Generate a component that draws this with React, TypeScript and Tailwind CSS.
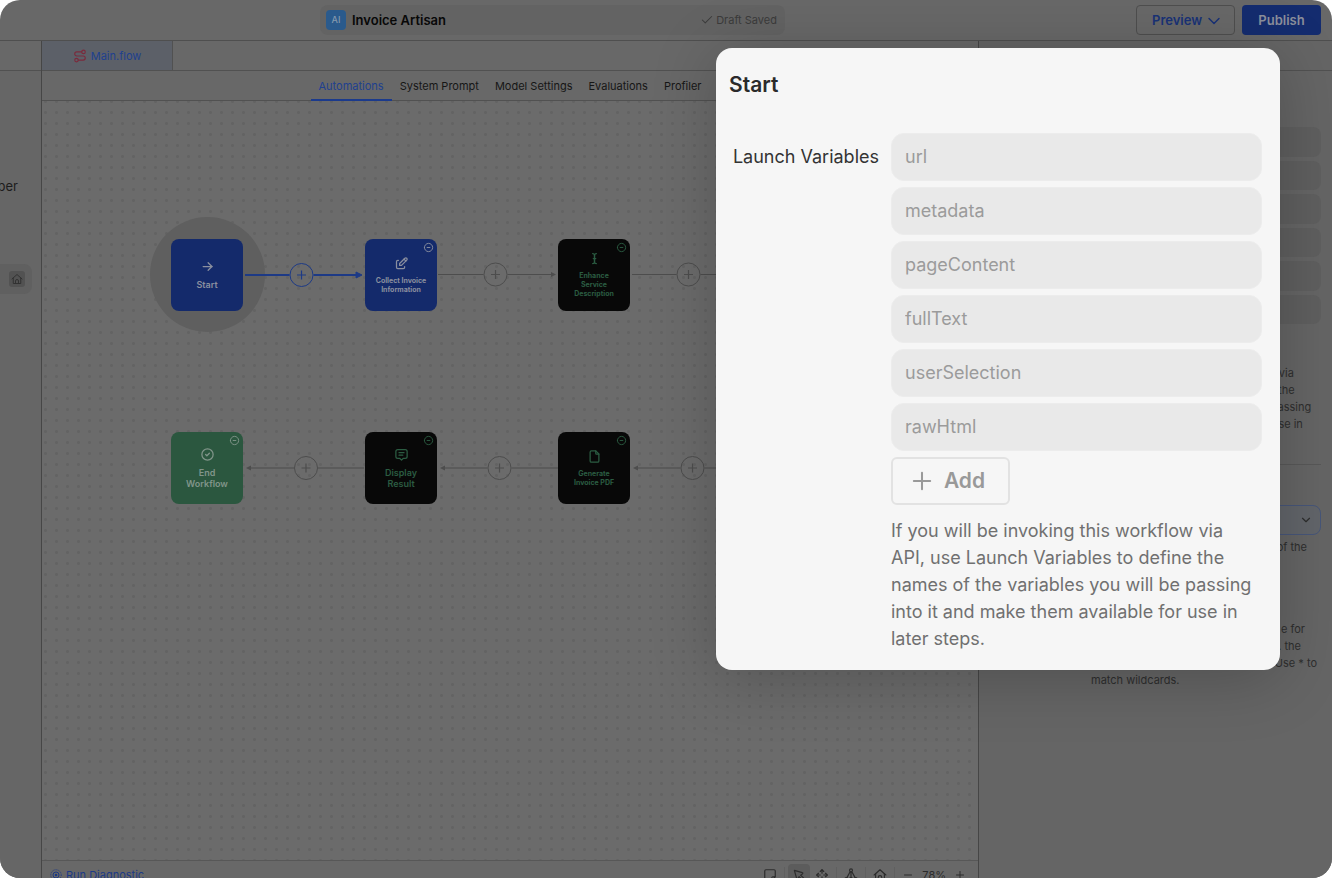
import React from "react";
import { Check, ChevronDown, Plus, Minus, Route } from "lucide-react";
import {
  TbArrowRight,
  TbArrowsMove,
  TbCircleCheck,
  TbCircleMinus,
  TbCursorText,
  TbEdit,
  TbFile,
  TbMessage2,
  TbPointer,
} from "react-icons/tb";

const launchVariables = ["url", "metadata", "pageContent", "fullText", "userSelection", "rawHtml"];
const views = ["Automations", "System Prompt", "Model Settings", "Evaluations", "Profiler"];

function HomeIcon({ className }: { className?: string }) {
  return (
    <svg viewBox="0 0 24 24" fill="none" stroke="currentColor" strokeWidth="2" strokeLinejoin="round" strokeLinecap="round" className={className}>
      <path d="M2 12 12 3l10 9" />
      <path d="M4.500 10v11h15V10" />
      <path d="M9 21v-5a3 3 0 0 1 6 0v5" />
    </svg>
  );
}

function NoteIcon() {
  return (
    <svg viewBox="0 0 24 24" fill="none" stroke="currentColor" strokeWidth="2" strokeLinejoin="round" className="size-[14px]">
      <path d="M3 5a2 2 0 0 1 2-2h14a2 2 0 0 1 2 2v10l-6 6H5a2 2 0 0 1-2-2z" />
      <path d="M21 15h-4a2 2 0 0 0-2 2v4" />
    </svg>
  );
}

function TreeIcon() {
  return (
    <svg viewBox="0 0 24 24" fill="none" stroke="currentColor" strokeWidth="2" className="size-[14px]">
      <circle cx="12" cy="4" r="2.500" />
      <circle cx="4" cy="19" r="2.500" />
      <circle cx="12" cy="19" r="2.500" />
      <circle cx="20" cy="19" r="2.500" />
      <path d="M12 6.500v10M10.500 6.500 5 16.500M13.500 6.500 19 16.500" />
    </svg>
  );
}

function DiagnosticIcon() {
  return (
    <svg viewBox="0 0 24 24" fill="none" stroke="currentColor" className="size-3">
      <circle cx="12" cy="12" r="10.500" strokeWidth="2" strokeDasharray="2 2.100" />
      <circle cx="12" cy="12" r="6" strokeWidth="2" />
      <circle cx="12" cy="12" r="2.500" fill="currentColor" stroke="none" />
    </svg>
  );
}

type NodeProps = {
  place: string;
  tone: string;
  text: string;
  icon: React.ReactNode;
  lines: string[];
  collapsible?: boolean;
};

function FlowNode({ place, tone, text, icon, lines, collapsible = true }: NodeProps) {
  return (
    <div className={`absolute flex size-[72px] flex-col items-center justify-center gap-[5px] rounded-lg pb-px ${place} ${tone}`}>
      {collapsible && <TbCircleMinus className="absolute top-[3px] right-[3px] size-[11px]" />}
      {icon}
      <div className={`text-center ${text}`}>
        {lines.map((line) => (
          <div key={line}>{line}</div>
        ))}
      </div>
    </div>
  );
}

function Connector({ x, y, plus, left, active }: { x: number; y: number; plus: number; left?: boolean; active?: boolean }) {
  const end = x + 117;
  return (
    <g className={active ? "text-[#1d3a86]" : "text-[#4d4d4d]"} stroke="currentColor" strokeWidth={active ? 2 : 1}>
      <path d={`M${left ? x + 2 : x} ${y}H${plus - 12}M${plus + 12} ${y}H${left ? end + 1 : end - 3}`} />
      <path
        d={left ? `M${x} ${y}l5-2.500v5z` : active ? `M${end} ${y}l-6-3v6z` : `M${end + 1} ${y}l-5-2.500v5z`}
        fill="currentColor"
        strokeWidth={active ? 1 : 0}
      />
      <circle cx={plus} cy={y} r="11.500" fill="none" strokeWidth="1" />
      <path d={`M${plus - 4.5} ${y}h9M${plus} ${y - 4.5}v9`} strokeWidth="1.200" />
    </g>
  );
}

function Canvas() {
  return (
    <div className="relative min-h-0 flex-1 overflow-hidden bg-[#6b6b6b] bg-[radial-gradient(circle_at_center,#636363_1px,transparent_2px)] bg-[size:11px_11px] bg-[position:-2px_6px]">
      <div className="absolute top-[116px] left-[108px] size-[115px] rounded-full bg-[#5f5f5f]" />
      <svg className="absolute inset-0 size-full" aria-hidden="true">
        <Connector x={203} y={174} plus={259.5} active />
        <Connector x={396} y={173.5} plus={453.5} />
        <Connector x={590} y={173.5} plus={646.5} />
        <Connector x={204} y={367} plus={264} left />
        <Connector x={398} y={367} plus={457.5} left />
        <Connector x={591} y={367} plus={650.5} left />
      </svg>
      <FlowNode place="top-[138px] left-[129px]" tone="bg-[#142a6b] text-[#8a8f9f]" text="text-[9px] leading-[11px] font-semibold" icon={<TbArrowRight className="size-[15px]" />} lines={["Start"]} collapsible={false} />
      <FlowNode place="top-[138px] left-[323px]" tone="bg-[#142a6b] text-[#8a8f9f]" text="text-[7px] leading-[9px] font-bold" icon={<TbEdit className="size-[15px]" />} lines={["Collect Invoice", "Information"]} />
      <FlowNode place="top-[138px] left-[516px]" tone="bg-[#080808] text-[#2b5c42]" text="text-[7px] leading-[9px] font-bold" icon={<TbCursorText className="size-[15px]" />} lines={["Enhance", "Service", "Description"]} />
      <FlowNode place="top-[331px] left-[129px]" tone="bg-[#2b573f] text-[#81958a]" text="text-[9px] leading-[11px] font-semibold" icon={<TbCircleCheck className="size-[15px]" />} lines={["End", "Workflow"]} />
      <FlowNode place="top-[331px] left-[323px]" tone="bg-[#080808] text-[#2b5c42]" text="text-[9px] leading-[11px] font-semibold" icon={<TbMessage2 className="size-[15px]" />} lines={["Display", "Result"]} />
      <FlowNode place="top-[331px] left-[516px]" tone="bg-[#080808] text-[#2b5c42]" text="text-[7px] leading-[9px] font-bold" icon={<TbFile className="size-[15px]" />} lines={["Generate", "Invoice PDF"]} />
    </div>
  );
}

function CanvasFooter() {
  return (
    <footer className="h-[18px] shrink-0 overflow-hidden border-t border-[#575757]">
      <div className="flex h-7 items-center pr-3 pl-2">
        <button className="flex items-center gap-1 text-[11px] text-[#1d3a86]">
          <DiagnosticIcon />
          Run Diagnostic
        </button>
        <div className="ml-auto flex items-center gap-[7px] text-[#2c2c2c]">
          <button aria-label="Add note"><NoteIcon /></button>
          <div className="h-4 w-px bg-[#606060]" />
          <div className="-ml-1 flex items-center gap-[5px]">
            <button aria-label="Select" className="flex size-[22px] items-center justify-center rounded bg-[#5c5c5c]"><TbPointer className="size-[14px]" /></button>
            <button aria-label="Pan"><TbArrowsMove className="size-[14px]" /></button>
          </div>
          <div className="h-4 w-px bg-[#606060]" />
          <button aria-label="Arrange"><TreeIcon /></button>
          <div className="h-4 w-px bg-[#606060]" />
          <button aria-label="Reset view"><HomeIcon className="size-[14px]" /></button>
          <div className="h-4 w-px bg-[#606060]" />
          <div className="flex items-center gap-2">
            <button aria-label="Zoom out"><Minus className="size-3" /></button>
            <span className="text-[11px]">78%</span>
            <button aria-label="Zoom in"><Plus className="size-3" /></button>
          </div>
        </div>
      </div>
    </footer>
  );
}

function LaunchModal() {
  return (
    <section role="dialog" aria-labelledby="dialog-title" className="absolute top-12 right-[52px] w-[564px] rounded-2xl bg-[#f6f6f6] pt-[22px] pr-[18px] pb-[18px] pl-[13px] shadow-[0_8px_64px_rgba(0,0,0,0.220)]">
      <h2 id="dialog-title" className="text-[21px] leading-[30px] font-semibold text-[#2a2a2a]">Start</h2>
      <div className="mt-[33px] flex">
        <label htmlFor="variable-url" className="w-[162px] shrink-0 pr-3 text-right text-[18px] leading-[48px] text-[#333333]">Launch Variables</label>
        <div className="min-w-0 flex-1">
          <div className="flex flex-col gap-1.5">
            {launchVariables.map((name) => (
              <input
                key={name}
                id={`variable-${name}`}
                aria-label={name === "url" ? undefined : name}
                defaultValue={name}
                className="h-12 w-full rounded-[13px] border border-[#ececec] bg-[#e9e9e9] px-[13px] pb-0.5 text-[18px] text-[#9b9b9b]"
              />
            ))}
            <button className="flex h-12 w-[119px] items-center justify-center gap-2 rounded-md border-2 border-[#e2e2e2] pr-2 text-[21px] font-semibold text-[#999999]">
              <Plus className="size-7" strokeWidth={1.75} />
              Add
            </button>
          </div>
          <p className="mt-3 pr-2 text-[18px] leading-[27px] text-[#707070]">
            If you will be invoking this workflow via API, use Launch Variables to define the names of the variables you will be passing into it and make them available for use in later steps.
          </p>
        </div>
      </div>
    </section>
  );
}

function Inspector() {
  return (
    <aside className="flex w-[354px] shrink-0 flex-col border-l border-[#464646] bg-[#656565] text-[11px] leading-[17px] text-[#2e2e2e]">
      <div className="h-[30px] shrink-0 border-b border-[#515151]" />
      <div className="flex flex-col pt-14 pr-[11px] pl-28">
        <div className="grid h-[197px] grid-rows-6 gap-1">
          {launchVariables.map((name) => (
            <div key={name} className="rounded-lg bg-[#5f5f5f]" />
          ))}
        </div>
        <p className="mt-[41px]">
          If you will be invoking this workflow via<br />
          API, use Launch Variables to define the<br />
          names of the variables you will be passing<br />
          into it and make them available for use in<br />
          later steps.
        </p>
        <div className="mt-[14px] h-px bg-[#585858]" />
        <button aria-label="Options" className="mt-10 flex h-[30px] items-center justify-end rounded-lg border border-[#475679] bg-[#62656a] pr-[7px]">
          <ChevronDown className="size-[14px]" />
        </button>
        <p className="mt-1 pr-3.5 text-right">of the</p>
        <div className="mt-[65px]">
          <p className="pr-4 text-right">e for</p>
          <p className="pr-5 text-right">. the</p>
          <p className="pr-1 text-right">Use * to</p>
          <p>match wildcards.</p>
        </div>
      </div>
    </aside>
  );
}

export default function App() {
  return (
    <div className="h-screen bg-white">
      <div className="relative flex h-full flex-col overflow-hidden rounded-[20px] bg-[#686868] font-['Inter',sans-serif]">
        <header className="flex h-[41px] shrink-0 items-center border-b border-[#4f4f4f] pr-[11px] pl-80">
          <div className="flex h-[30px] w-[465px] items-center gap-1.5 rounded-lg bg-[#636363] px-1.5">
            <span className="flex size-5 items-center justify-center rounded bg-[#2a5a8c] text-[9px] font-medium text-[#8499ae]">AI</span>
            <h1 className="pt-0.5 text-[13px] font-semibold text-[#080808]">Invoice Artisan</h1>
            <span className="ml-auto flex items-center gap-0.5 pr-0.5 text-[11px] text-[#3b3b3b]">
              <Check className="size-3.5" strokeWidth={1.75} />
              Draft Saved
            </span>
          </div>
          <div className="ml-auto flex gap-[7px]">
            <button className="flex h-[30px] w-[99px] items-center gap-0.5 rounded border border-[#4e4e4e] pt-px pl-[15px] text-[13px] font-semibold text-[#193276]">
              Preview
              <ChevronDown className="size-5" strokeWidth={1.75} />
            </button>
            <button className="h-[30px] w-[79px] rounded bg-[#142c6f] pt-px text-[13px] font-semibold text-[#8b8f9b]">Publish</button>
          </div>
        </header>
        <div className="flex min-h-0 flex-1">
          <nav className="flex w-[42px] shrink-0 flex-col overflow-hidden border-r border-[#464646] bg-[#666666]">
            <div className="h-[30px] shrink-0 border-b border-[#515151] bg-[#686868]" />
            <div className="mt-[106px] flex justify-end pr-[23px] text-[13px] leading-[18px] text-[#1c1c1c]">ber</div>
            <a href="#home" aria-label="Home" className="mt-[69px] flex h-[30px] w-8 items-center justify-end rounded-r-lg bg-[#606060] pr-[7px]">
              <span className="flex size-4 items-center justify-center rounded-[3px] bg-[#525252] text-[#323232]">
                <HomeIcon className="size-3" />
              </span>
            </a>
          </nav>
          <main className="flex min-w-0 flex-1 flex-col">
            <div className="flex h-[30px] shrink-0 border-b border-[#515151]">
              <a href="#main-flow" className="flex w-[131px] items-center justify-center gap-1 border-r border-[#515151] bg-[#5c6068] pt-px text-[11px] text-[#20408f]">
                <Route className="size-[14px] text-[#7b2a3c]" />
                Main.flow
              </a>
            </div>
            <nav className="flex h-[30px] shrink-0 justify-center border-b border-[#515151] text-[11px] text-[#161616]">
              {views.map((view, index) => (
                <a
                  key={view}
                  href={`#view-${index}`}
                  className={index === 0 ? "-mb-px flex items-center border-b-2 border-[#1b3a8c] px-2 pt-0.5 text-[#20408f]" : "flex items-center px-2 pt-px"}
                >
                  {view}
                </a>
              ))}
            </nav>
            <Canvas />
            <CanvasFooter />
          </main>
          <Inspector />
        </div>
        <LaunchModal />
      </div>
    </div>
  );
}
